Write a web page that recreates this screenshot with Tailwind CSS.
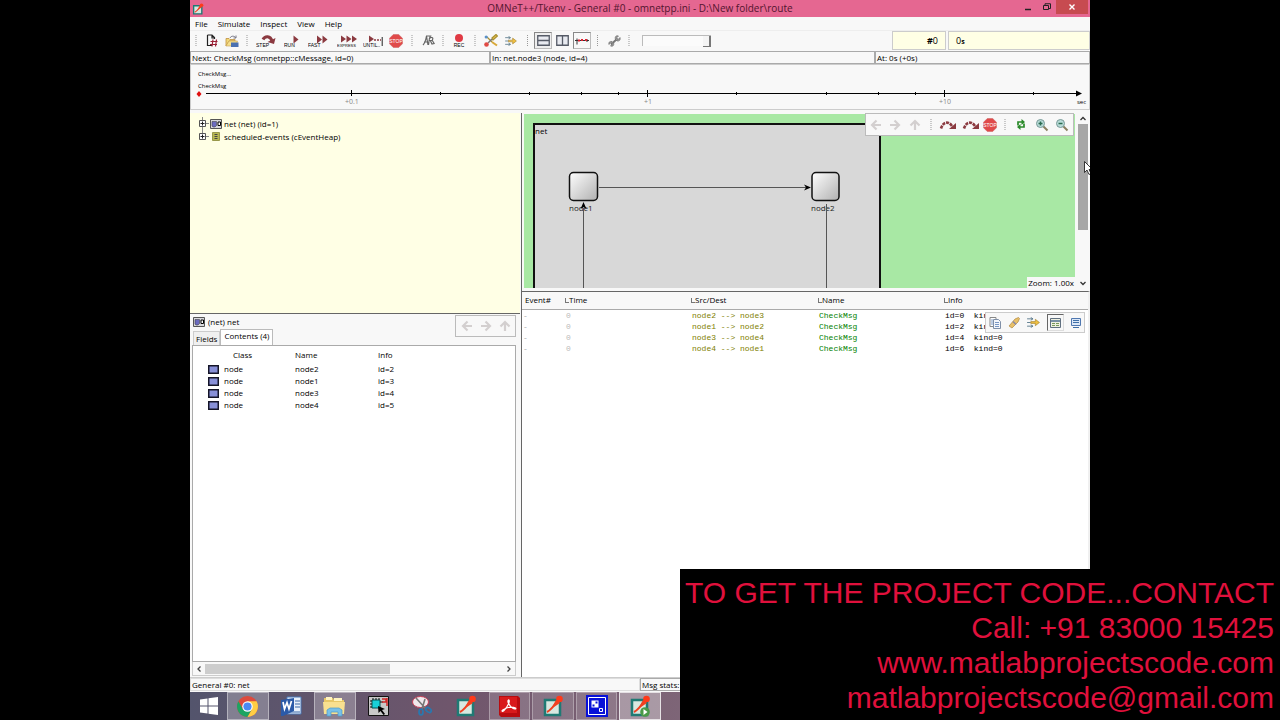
<!DOCTYPE html>
<html lang="en">
<head>
  <meta charset="UTF-8">
  <meta name="viewport" content="width=device-width, initial-scale=1.0">
  <title>OMNeT++/Tkenv - General #0</title>
  <script src="https://cdn.jsdelivr.net/npm/@tailwindcss/browser@4"></script>
</head>
<body class="bg-black h-screen overflow-hidden relative px-[190px] font-['Open_Sans',sans-serif] text-[8px] leading-3 text-black">

  <!-- shared icons -->
  <svg class="hidden">
    <symbol id="i-sep" viewBox="0 0 2 12"><path d="M1 0v12" stroke="#999" stroke-width="1" stroke-dasharray="1 1"/></symbol>
    <symbol id="i-stop" viewBox="0 0 14 14">
      <path d="M4.300.5h5.400l3.800 3.800v5.400l-3.800 3.800H4.300L.5 9.700V4.300z" fill="#e04a4a" stroke="#cf6a6a" stroke-width=".6"/>
      <text x="7" y="9" text-anchor="middle" font-size="5" fill="#fff" font-family="Liberation Sans">STOP</text>
    </symbol>
    <symbol id="i-left" viewBox="0 0 12 12"><path d="M11 6H2M6.500 1.500 2 6l4.500 4.500" fill="none" stroke="#d3cfcf" stroke-width="2.200"/></symbol>
    <symbol id="i-right" viewBox="0 0 12 12"><path d="M1 6h9M5.500 1.500 10 6l-4.500 4.500" fill="none" stroke="#d3cfcf" stroke-width="2.200"/></symbol>
    <symbol id="i-up" viewBox="0 0 12 12"><path d="M6 11V2M1.500 6.500 6 2l4.500 4.500" fill="none" stroke="#d3cfcf" stroke-width="2.200"/></symbol>
    <symbol id="i-hop" viewBox="0 0 18 12">
      <path d="M2 9.500C4 3 9 1.500 13 7" fill="none" stroke="#8b3a40" stroke-width="2.600" stroke-dasharray="3 1"/>
      <path d="M17 4v6h-7z" fill="#8b3a40"/>
    </symbol>
    <symbol id="i-mag" viewBox="0 0 14 14">
      <path d="m8 8 4.500 4.500" stroke="#8a8060" stroke-width="2"/>
      <circle cx="5.500" cy="5.500" r="4" fill="#b8dcd8" stroke="#7a9a98" stroke-width="1"/>
      <path d="M3.500 5.500h4" stroke="#2c6b50" stroke-width="1.500"/>
    </symbol>
    <symbol id="i-compound" viewBox="0 0 12 10">
      <path d="M.5.5h11v9H.5z" fill="#d8d8dc" stroke="#555"/>
      <path d="M2 2.500h4.500v4L5 8H3L2 7z" fill="#6c6cc0" stroke="#333" stroke-width=".5"/>
      <path d="M8 3h2.500v3.500H8z" fill="#fff" stroke="#000" stroke-width="1"/>
    </symbol>
    <symbol id="i-module" viewBox="0 0 11 9"><path d="M.75.75h9.500v7.500H.75z" fill="#8890d8" stroke="#151528" stroke-width="1.500"/></symbol>
    <symbol id="i-filter" viewBox="0 0 14 12">
      <path d="M0 2h6M0 6h4M0 10h6M4 .5 6.500 2 4 3.500M4 8.500 6.500 10 4 11.500" fill="none" stroke="#5a7a8c" stroke-width="1"/>
      <path d="M4 5h5V2.500L13.500 6 9 9.500V7H4z" fill="#f0c040" stroke="#a08030" stroke-width=".7"/>
    </symbol>
    <symbol id="i-omnet" viewBox="0 0 20 22">
      <path d="M2 5h15v15H2z" fill="#d8e8e0" stroke="#1f7a74" stroke-width="2.500"/>
      <path d="M4 17C8 15 11 11 15 5" fill="none" stroke="#f04020" stroke-width="2"/>
      <path d="m8 14 5-9 4 3z" fill="#f04020"/>
      <circle cx="16.500" cy="4" r="3.300" fill="#ff3a1a"/>
    </symbol>
  </svg>

  <div class="h-full flex flex-col bg-[#f8f8f8] relative">

    <!-- title bar -->
    <header class="h-[17px] shrink-0 bg-[#e56791] flex items-center justify-between relative">
      <svg class="w-3 h-3 ml-[2px]"><use href="#i-omnet"/></svg>
      <h1 class="absolute inset-x-0 text-center text-[10px] leading-[17px] text-[#52152e]">OMNeT++/Tkenv - General #0 - omnetpp.ini - D:\New folder\route</h1>
      <div class="flex h-full relative pr-[2px]">
        <button aria-label="Minimize" class="w-[18px] flex items-center justify-center"><svg class="w-[6px] h-2" viewBox="0 0 6 8"><path d="M0 4.500h6" stroke="#222" stroke-width="1.500"/></svg></button>
        <button aria-label="Restore" class="w-[19px] flex justify-center items-start pt-[3px]"><svg class="w-2 h-2" viewBox="0 0 8 8"><path d="M.5 2.500h5v4h-5zM2 2.500V.75h5.500V5.500H5.500" fill="none" stroke="#222"/></svg></button>
        <button aria-label="Close" class="w-8 h-[14px] bg-[#c74b50] flex items-center justify-center"><svg class="w-[6px] h-[6px]" viewBox="0 0 6 6"><path d="m.5.5 5 5m0-5-5 5" stroke="#fff" stroke-width="1.400"/></svg></button>
      </div>
    </header>

    <!-- menu -->
    <nav class="h-[13px] shrink-0 flex items-center gap-[10px] pl-[5px]">
      <button>File</button><button>Simulate</button><button>Inspect</button><button>View</button><button>Help</button>
    </nav>

    <!-- toolbar -->
    <div class="h-[21px] shrink-0 flex items-center border-t border-[#eee] pl-px pb-px">
      <svg class="w-[10px] h-3"><use href="#i-sep"/></svg>
      <button aria-label="New" class="w-[21px] flex justify-center"><svg class="w-3 h-[13px]" viewBox="0 0 12 13"><path d="M1.500 1v10.500H6M1.500 1H6l2.500 2.500V5M6 1v3h2.500" fill="none" stroke="#222" stroke-width="1.200"/><path d="m7 5.500-1 7M10.500 5.500l-1 7M4.500 7.500h7M4 10.500h7" stroke="#9b2035" stroke-width="1.200"/></svg></button>
      <button aria-label="Open" class="w-5 flex justify-center"><svg class="w-[14px] h-3" viewBox="0 0 14 12"><path d="M1 11V3.500h3l1 1h5V6H4z" fill="#f0d878" stroke="#c09040" stroke-width=".8"/><path d="M1 11 4 6h8.500L11 11z" fill="#f6e08c" stroke="#c8a050" stroke-width=".6"/><path d="M5 3C6 .8 9 .6 10.500 2.500M11 .5v2.500H8.500" fill="none" stroke="#667" stroke-width=".9"/><path d="M6 7.500h7.500V12H6z" fill="#4a70b0"/></svg></button>
      <svg class="w-[10px] h-3"><use href="#i-sep"/></svg>
      <button aria-label="Step" class="w-7 flex justify-center"><svg class="w-5 h-3" viewBox="0 0 20 12"><path d="M7 4.500C9 .5 14.500.5 16 6" fill="none" stroke="#8b3a40" stroke-width="3"/><path d="m19.500 3-1.500 6-6.500-2z" fill="#8b3a40"/><text x="0" y="11.500" font-size="5" font-family="Liberation Sans">STEP</text></svg></button>
      <button aria-label="Run" class="w-[22px] flex justify-center"><svg class="w-[15px] h-3" viewBox="0 0 15 12"><path d="m9.500.5 5 4-5 4z" fill="#8b3a40"/><text x="0" y="11.500" font-size="5" font-family="Liberation Sans">RUN</text></svg></button>
      <button aria-label="Fast" class="w-[31px] flex justify-center"><svg class="w-5 h-3" viewBox="0 0 20 12"><path d="m9 .5 5 4-5 4zM14.500.5l5 4-5 4z" fill="#8b3a40"/><text x="0" y="11.500" font-size="5" font-family="Liberation Sans">FAST</text></svg></button>
      <button aria-label="Express" class="w-[27px] flex justify-center"><svg class="w-5 h-3" viewBox="0 0 20 12"><path d="m4 .5 5 3.500-5 3.500zM9.500.5l5 3.500-5 3.500zM15 .5 20 4l-5 3.500z" fill="#8b3a40"/><text x="0" y="11.500" font-size="4" font-family="Liberation Sans">EXPRESS</text></svg></button>
      <button aria-label="Until" class="w-[26px] flex justify-center"><svg class="w-5 h-3" viewBox="0 0 20 12"><path d="m6 .5 5 3.500-5 3.500z" fill="#8b3a40"/><path d="M11 5h7" stroke="#8b3a40" stroke-width="1.500" stroke-dasharray="2 1"/><path d="M19.200 2v9" stroke="#222" stroke-width="1"/><text x="0" y="11.500" font-size="5" font-family="Liberation Sans">UNTIL..</text></svg></button>
      <button aria-label="Stop" class="w-5 flex justify-center"><svg class="w-[14px] h-[14px]"><use href="#i-stop"/></svg></button>
      <svg class="w-3 h-3"><use href="#i-sep"/></svg>
      <button aria-label="Call finish" class="w-5 flex justify-center"><svg class="w-[13px] h-[11px]" viewBox="0 0 13 11"><path d="M1 10c2-2 3-6 3.500-9L6 10M2 7h4M4 1h4.500C7 3 7 7 6.500 10M7 4c3-3 5-1 3 1.500H7.500M10 5l2.500 4M8.500 6l1.500 3 2-.500" fill="none" stroke="#666" stroke-width="1.200"/></svg></button>
      <svg class="w-[10px] h-3"><use href="#i-sep"/></svg>
      <button aria-label="Record" class="w-[22px] flex justify-center"><svg class="w-3 h-[13px]" viewBox="0 0 12 13"><circle cx="6" cy="4" r="4" fill="#e03a44"/><text x="6" y="12.500" text-anchor="middle" font-size="5" font-family="Liberation Sans">REC</text></svg></button>
      <svg class="w-[10px] h-3"><use href="#i-sep"/></svg>
      <button aria-label="Find" class="w-[21px] flex justify-center"><svg class="w-[14px] h-[13px]" viewBox="0 0 14 13"><path d="m3 3 5 5M8 4l4-3.500 1.500 1.500L9 6z" fill="#e8c050" stroke="#a89030" stroke-width="1.200"/><path d="m4 9 4-4" stroke="#777" stroke-width="1.500"/><circle cx="2.500" cy="10.500" r="2.300" fill="#e04a44"/><circle cx="2.200" cy="3" r="1.600" fill="#5a90c8"/><path d="m8 8 5 3.500" stroke="#d8a838" stroke-width="2"/></svg></button>
      <button aria-label="Filter" class="w-5 flex justify-center"><svg class="w-3 h-[10px]"><use href="#i-filter"/></svg></button>
      <svg class="w-[13px] h-3"><use href="#i-sep"/></svg>
      <button aria-label="Vertical layout" class="w-[18px] h-[17px] border border-[#bbb] border-t-[#888] border-l-[#888] bg-[#eee] flex items-center justify-center"><svg class="w-[13px] h-[11px]" viewBox="0 0 13 11"><path d="M.75.75h11.500v9.500H.75zM1 5.500h11" fill="#e8eaf0" stroke="#555a66" stroke-width="1.300"/></svg></button>
      <button aria-label="Horizontal layout" class="w-[21px] flex justify-center"><svg class="w-[13px] h-[11px]" viewBox="0 0 13 11"><path d="M.75.75h11.500v9.500H.75zM6.500 1v9" fill="#e8eaf0" stroke="#555a66" stroke-width="1.300"/></svg></button>
      <button aria-label="Timeline" class="w-[18px] h-[17px] border border-[#bbb] border-t-[#888] border-l-[#888] flex items-center justify-center"><svg class="w-[15px] h-[11px]" viewBox="0 0 15 11"><path d="M0 5.500h14M2 3.500v6M12 4v3" stroke="#333" stroke-width="1"/><path d="M3 5.500h2M6 5h2M10 5h2" stroke="#e02030" stroke-width="2"/></svg></button>
      <svg class="w-[13px] h-3"><use href="#i-sep"/></svg>
      <button aria-label="Preferences" class="w-5 flex justify-center"><svg class="w-[13px] h-3" viewBox="0 0 13 12"><path d="m3 9.500 6.500-6" stroke="#777" stroke-width="2"/><path d="M12 2.500 10 4.500 8.500 3 10.500 1C8 0 6.500 2 7.500 4.500L9 6c2 .5 4-1 3-3.500zM1 9.500l2-2 1.500 1.500-2 2C5 12 6.500 10 5.500 8L4 6.500C1.500 6 .2 7.500 1 9.500z" fill="#999" stroke="#666" stroke-width=".6"/></svg></button>
      <svg class="w-[10px] h-3 mr-2"><use href="#i-sep"/></svg>
      <input type="range" aria-label="Animation speed" min="0" max="100" value="100" class="appearance-none w-[69px] h-[11px] bg-[#fbfbfb] border-t border-l border-[#bbb] [&::-webkit-slider-thumb]:appearance-none [&::-webkit-slider-thumb]:w-2 [&::-webkit-slider-thumb]:h-[11px] [&::-webkit-slider-thumb]:bg-[#f4f4f4] [&::-webkit-slider-thumb]:border-r-2 [&::-webkit-slider-thumb]:border-b [&::-webkit-slider-thumb]:border-[#777]">
      <div class="ml-auto w-[198px] h-[19px] flex gap-[2px] text-[9px] leading-[17px]">
        <output class="w-[54px] border border-[#ccc] bg-[#ffffe5] text-right pr-[7px]"><b>#</b>0</output>
        <output class="flex-1 border border-[#ccc] bg-[#ffffe5] pl-[7px]">0<b class="text-[7px]">s</b></output>
      </div>
    </div>

    <!-- simulation status -->
    <div class="h-[13px] shrink-0 grid grid-cols-[300fr_385fr_215fr] leading-[11px]">
      <div class="border border-[#aaa] pl-px">Next: CheckMsg (omnetpp::cMessage, id=0)</div>
      <div class="border border-[#aaa] pl-px">In: net.node3 (node, id=4)</div>
      <div class="border border-[#aaa] pl-px">At: 0s (+0s)</div>
    </div>

    <!-- timeline -->
    <svg class="w-full shrink-0 border border-[#ccc]" viewBox="1 1 898 44">
      <g stroke="#000">
        <path d="M16 29.500h872"/>
        <path d="M161.500 26v6M457.500 26v7M754.500 26v7M250.500 28v3M339.500 28v3M391.500 28v3M428.500 28v3M546.500 28v3M636.500 28v3M688.500 28v3M725.500 28v3M843.500 28v3"/>
      </g>
      <path d="m886 26.500 6 3-6 3z"/>
      <path d="m9 27 2.500 3-2.500 3-2.500-3z" fill="#e01010"/>
      <g font-size="7" font-family="Open Sans">
        <text x="8" y="12" font-size="6">CheckMsg...</text>
        <text x="8" y="24" font-size="6">CheckMsg</text>
        <g fill="#888"><text x="155" y="40">+0.1</text><text x="454" y="40">+1</text><text x="749" y="40">+10</text></g>
        <text x="887" y="40" font-size="6">sec</text>
      </g>
    </svg>

    <div class="flex-1 min-h-0 flex pt-[3px]">
      <!-- left: object tree and inspector -->
      <div class="w-[330px] shrink-0 flex flex-col">
        <ul class="h-[201px] shrink-0 bg-[#ffffe5] border-b border-[#666] pt-1 pl-2">
          <li class="flex items-center h-[13px]"><svg class="w-3 h-[13px]" viewBox="0 0 12 13"><path d="M4.500 0v13M8 6.500h3" stroke="#888"/><path d="M1.500 3.500h6v6h-6z" fill="#fff" stroke="#555"/><path d="M2.500 6.500h4M4.500 4.500v4" stroke="#222"/></svg><svg class="w-3 h-[10px] mr-[2px]"><use href="#i-compound"/></svg>net (net) (id=1)</li>
          <li class="flex items-center h-[13px]"><svg class="w-3 h-[13px]" viewBox="0 0 12 13"><path d="M4.500 0v4M8 6.500h3" stroke="#888"/><path d="M1.500 3.500h6v6h-6z" fill="#fff" stroke="#555"/><path d="M2.500 6.500h4M4.500 4.500v4" stroke="#222"/></svg><svg class="w-3 h-[9px] mr-[2px]" viewBox="0 0 12 9"><path d="M2.500.5h7v8h-7z" fill="#b8b850" stroke="#98984a"/><path d="M4.500 2.500h3M4.500 4.500h3M4.500 6.500h3" stroke="#444"/></svg>scheduled-events (cEventHeap)</li>
        </ul>

        <div class="flex justify-between pt-px pr-1">
          <div>
            <div class="flex items-center gap-[3px] h-[14px] pl-[3px]"><svg class="w-3 h-[10px]"><use href="#i-compound"/></svg>(net) net</div>
            <div class="flex items-end pl-[3px]" role="tablist">
              <button role="tab" class="h-[14px] px-[2px] border border-b-0 border-[#ccc] bg-[#f0f0f0]">Fields</button>
              <button role="tab" aria-selected="true" class="h-4 px-[3px] pb-1 border border-b-0 border-[#bbb] bg-white">Contents (4)</button>
            </div>
          </div>
          <div class="w-[61px] h-[22px] border border-[#bbb] flex items-center justify-around px-px">
            <button aria-label="Back"><svg class="w-3 h-3"><use href="#i-left"/></svg></button>
            <button aria-label="Forward"><svg class="w-3 h-3"><use href="#i-right"/></svg></button>
            <button aria-label="Up"><svg class="w-3 h-3"><use href="#i-up"/></svg></button>
          </div>
        </div>
        <div class="flex-1 min-h-0 ml-[2px] mr-1 bg-white border border-[#aaa]">
          <table class="w-full table-fixed text-left">
            <colgroup><col class="w-[15px]"><col class="w-[16px]"><col class="w-[71px]"><col class="w-[83px]"><col></colgroup>
            <thead><tr class="h-[17px]"><th colspan="2"></th><th class="font-normal pl-[9px]">Class</th><th class="font-normal">Name</th><th class="font-normal">Info</th></tr></thead>
            <tbody>
              <tr><td></td><td><svg class="w-[11px] h-[9px]"><use href="#i-module"/></svg></td><td>node</td><td>node2</td><td>id=2</td></tr>
              <tr><td></td><td><svg class="w-[11px] h-[9px]"><use href="#i-module"/></svg></td><td>node</td><td>node1</td><td>id=3</td></tr>
              <tr><td></td><td><svg class="w-[11px] h-[9px]"><use href="#i-module"/></svg></td><td>node</td><td>node3</td><td>id=4</td></tr>
              <tr><td></td><td><svg class="w-[11px] h-[9px]"><use href="#i-module"/></svg></td><td>node</td><td>node4</td><td>id=5</td></tr>
            </tbody>
          </table>
        </div>
        <div class="h-[14px] ml-[2px] mr-1 mb-px border border-t-0 border-[#ccc] flex items-center px-[3px]">
          <svg class="w-[6px] h-2" viewBox="0 0 6 8"><path d="M4.500 1.500 2 4l2.500 2.500" fill="none" stroke="#444" stroke-width="1.300"/></svg>
          <div class="flex-1 mx-[3px]"><div class="w-[62%] h-[10px] bg-[#cdcdcd]"></div></div>
          <svg class="w-[6px] h-2" viewBox="0 0 6 8"><path d="M1.500 1.500 4 4 1.500 6.500" fill="none" stroke="#444" stroke-width="1.300"/></svg>
        </div>
      </div>

      <!-- right: network canvas and event log -->
      <div class="flex-1 min-w-0 flex flex-col ml-px border-l border-[#666]">
        <div class="h-[175px] shrink-0 flex pt-px pl-[2px] relative">
          <div class="flex-1 bg-[#a8e8a4] relative overflow-hidden">
            <div class="absolute left-[9px] top-[9px] -bottom-1 w-[348px] bg-[#d8d8d8] border-2 border-[#111]">net</div>
            <svg class="absolute left-0 top-0 w-[360px] h-[175px]" viewBox="0 0 360 175">
              <defs><linearGradient id="node" x1="0" y1="0" x2="1" y2="1"><stop offset="0" stop-color="#fff"/><stop offset="1" stop-color="#b0b0b0"/></linearGradient></defs>
              <g fill="url(#node)" stroke="#111" stroke-width="1.500"><rect x="45.500" y="58.500" width="28" height="28" rx="4"/><rect x="288" y="58.500" width="27" height="28" rx="4"/></g>
              <g font-size="8" font-family="Open Sans" fill="#222"><text x="45" y="97">node1</text><text x="287" y="97">node2</text></g>
              <path d="M75 73.500h207M59.500 94v82M302.500 90v86" stroke="#555"/>
              <path d="m287 73.500-7-3 2 3-2 3zM59.500 88l-3 7 3-2 3 2z"/>
            </svg>
            <div class="absolute right-0 bottom-0 bg-[#f8f8f8] px-px leading-[11px]">Zoom: 1.00x</div>
          </div>
          <div class="absolute right-4 top-0 w-[209px] h-[23px] bg-[#f8f8f8] border border-[#bbb] flex items-center px-1">
            <button aria-label="Back" class="w-[19px]"><svg class="w-3 h-3"><use href="#i-left"/></svg></button>
            <button aria-label="Forward" class="w-5"><svg class="w-3 h-3"><use href="#i-right"/></svg></button>
            <button aria-label="Up" class="w-[18px]"><svg class="w-3 h-3"><use href="#i-up"/></svg></button>
            <svg class="w-2 h-3 mr-1"><use href="#i-sep"/></svg>
            <button aria-label="Run until next event" class="w-[23px]"><svg class="w-[18px] h-3"><use href="#i-hop"/></svg></button>
            <button aria-label="Fast run until next event" class="w-[21px]"><svg class="w-[18px] h-3"><use href="#i-hop"/></svg></button>
            <button aria-label="Stop" class="w-[18px]"><svg class="w-[14px] h-[14px]"><use href="#i-stop"/></svg></button>
            <svg class="w-2 h-3 mr-[7px]"><use href="#i-sep"/></svg>
            <button aria-label="Re-layout" class="w-[19px]"><svg class="w-[10px] h-[11px]" viewBox="0 0 10 11"><path d="M2 6.500V3h5M8 4.500V8H3" fill="none" stroke="#2a8a2a" stroke-width="1.700"/><path d="m5.500 0 3.500 3-3.500 3zM4.500 5 1 8l3.500 3z" fill="#2a8a2a"/></svg></button>
            <button aria-label="Zoom in" class="w-5"><svg class="w-[14px] h-[14px]"><use href="#i-mag"/><path d="M5.500 3.500v4" stroke="#2c6b50" stroke-width="1.500"/></svg></button>
            <button aria-label="Zoom out" class="w-[14px]"><svg class="w-[14px] h-[14px]"><use href="#i-mag"/></svg></button>
          </div>
          <div class="w-[15px] flex flex-col items-center justify-between">
            <svg class="w-2 h-[10px] shrink-0" viewBox="0 0 8 10"><path d="M1.500 6 4 3.500 6.500 6" fill="none" stroke="#333" stroke-width="1.300"/></svg>
            <div class="flex-1 w-[10px]"><div class="h-[106px] bg-[#a6a6a6]"></div></div>
            <svg class="w-2 h-[10px] shrink-0" viewBox="0 0 8 10"><path d="M1.500 4 4 6.500 6.500 4" fill="none" stroke="#333" stroke-width="1.300"/></svg>
          </div>
        </div>

        <div class="flex-1 min-h-0 mt-[3px] border-t border-[#666] relative bg-white border-r-2 border-r-[#f0f0f0]">
          <table class="w-full table-fixed text-left">
            <colgroup><col class="w-[43px]"><col class="w-[126px]"><col class="w-[127px]"><col class="w-[126px]"><col></colgroup>
            <thead class="bg-[#f8f8f8]">
              <tr class="h-[17px] border-b border-[#aaa] *:font-normal *:p-0">
                <th><span class="pl-[3px]">Event#</span></th>
                <th><span class="inline-block w-1 h-[5px] border-l border-b border-[#777]"></span>Time</th>
                <th><span class="inline-block w-1 h-[5px] border-l border-b border-[#777]"></span>Src/Dest</th>
                <th><span class="inline-block w-1 h-[5px] border-l border-b border-[#777]"></span>Name</th>
                <th><span class="inline-block w-1 h-[5px] border-l border-b border-[#777]"></span>Info</th>
              </tr>
            </thead>
            <tbody class="font-['Liberation_Mono',monospace] leading-[10px]">
              <tr class="h-[12px] align-bottom"><td class="pl-px text-[#aaa]">-</td><td class="pl-px text-[#bbb]">0</td><td class="pl-px text-[#808000]">node2 --&gt; node3</td><td class="pl-px text-[#008000]">CheckMsg</td><td class="pl-px whitespace-pre">id=0  kind=0</td></tr>
              <tr class="h-[11px] align-bottom"><td class="pl-px text-[#aaa]">-</td><td class="pl-px text-[#bbb]">0</td><td class="pl-px text-[#808000]">node1 --&gt; node2</td><td class="pl-px text-[#008000]">CheckMsg</td><td class="pl-px whitespace-pre">id=2  kind=0</td></tr>
              <tr class="h-[11px] align-bottom"><td class="pl-px text-[#aaa]">-</td><td class="pl-px text-[#bbb]">0</td><td class="pl-px text-[#808000]">node3 --&gt; node4</td><td class="pl-px text-[#008000]">CheckMsg</td><td class="pl-px whitespace-pre">id=4  kind=0</td></tr>
              <tr class="h-[11px] align-bottom"><td class="pl-px text-[#aaa]">-</td><td class="pl-px text-[#bbb]">0</td><td class="pl-px text-[#808000]">node4 --&gt; node1</td><td class="pl-px text-[#008000]">CheckMsg</td><td class="pl-px whitespace-pre">id=6  kind=0</td></tr>
            </tbody>
          </table>
          <div class="absolute right-[3px] top-[20px] w-[100px] h-[21px] bg-[#f8f8f8] border border-[#ccc] flex items-center justify-around">
            <button aria-label="Copy"><svg class="w-3 h-3" viewBox="0 0 12 12"><path d="M1 .5h6v9H1z" fill="#fff" stroke="#888"/><path d="M4.500 2.500h5l2 2v7h-7z" fill="#f4f6fa" stroke="#8090a8"/><path d="M6 5.500h4M6 7.500h4M6 9.500h4M2 3h2M2 5h2M2 7h2" stroke="#5a80b8" stroke-width=".8"/></svg></button>
            <button aria-label="Find"><svg class="w-3 h-3" viewBox="0 0 12 12"><path d="m1 9 6-7 3.500-1.500 1 1L10 5l-6 6z" fill="#e8c068" stroke="#b08840" stroke-width=".7"/><path d="m5 4.500 3 3" stroke="#8888a8" stroke-width="1.500"/></svg></button>
            <button aria-label="Filter"><svg class="w-[13px] h-[11px]"><use href="#i-filter"/></svg></button>
            <button aria-label="Messages view" class="w-[17px] h-[17px] border border-[#ddd] border-t-[#666] border-l-[#666] flex items-center justify-center"><svg class="w-[11px] h-[10px]" viewBox="0 0 11 10"><path d="M.5.5h10v9H.5z" fill="#eef0e0" stroke="#607080"/><path d="M1 3h9" stroke="#507090" stroke-width="1.500"/><path d="M2 5.500h3M6 5.500h3M2 7.500h3M6 7.500h3" stroke="#78985a"/></svg></button>
            <button aria-label="Log view"><svg class="w-[10px] h-[10px]" viewBox="0 0 10 10"><path d="M.5.500h9v7h-9z" fill="#dce8f8" stroke="#5078b0"/><path d="M2 2.500h6M2 4.500h6M2 9.500h6" stroke="#4070a8"/></svg></button>
          </div>
        </div>
      </div>
    </div>

    <!-- bottom status -->
    <footer class="h-[15px] shrink-0 border-t border-[#ccc] grid grid-cols-[450fr_450fr] leading-[11px] pb-px">
      <div class="border border-[#ddd] pl-px">General #0: net</div>
      <div class="border border-[#aaa] pl-px">Msg stats: 4 scheduled</div>
    </footer>

    <!-- taskbar -->
    <div class="h-7 shrink-0 bg-linear-to-r from-[#53546c] via-[#70566c] via-30% to-[#98828c] flex">
      <button aria-label="Start" class="w-[37px] flex items-center justify-center"><svg class="w-[18px] h-[18px]" viewBox="0 0 18 18"><path d="m0 2.500 7.500-1v7H0zM8.500 1.300 18 0v8.500H8.500zM0 9.500h7.500v7L0 15.500zM8.500 9.500H18V18l-9.500-1.300z" fill="#fff"/></svg></button>
      <div class="w-[434px] grid grid-cols-10 gap-[2px] *:flex *:items-center *:justify-center">
        <button aria-label="Chrome" class="bg-white/25 border border-white/40"><svg class="w-[21px] h-[21px]" viewBox="0 0 20 20"><circle cx="10" cy="10" r="10" fill="#dd4b3e"/><path d="M1.340 5A10 10 0 0 0 10 20l4.300-7.500-8.600 0z" fill="#1da462"/><path d="M18.660 5A10 10 0 0 1 10 20l4.300-7.500L10 5z" fill="#ffce44"/><circle cx="10" cy="10" r="5" fill="#fff"/><circle cx="10" cy="10" r="3.900" fill="#4a8af4"/></svg></button>
        <button aria-label="Word"><svg class="w-[22px] h-[21px]" viewBox="0 0 22 21"><path d="M7 1h14v17H7z" fill="#e8f0fa" stroke="#4a78b8"/><path d="M15 5h5M15 8h5M15 11h5M9 16h11" stroke="#3a68a8"/><path d="m1 4 13-2v13L3 20H1z" fill="#2b5aa8"/><path d="m3 6 1.500 7L7 6.500l2 6.500L11.500 5" fill="none" stroke="#fff" stroke-width="1.700"/></svg></button>
        <button aria-label="File Explorer" class="bg-white/25 border border-white/40"><svg class="w-[23px] h-[21px]" viewBox="0 0 23 21"><path d="M1 2h9l1 2h10v14H1z" fill="#e8c868"/><path d="M3 1h6v3H3zM11 2h8v3h-8z" fill="#fff4c0"/><path d="M0 6h22l-1 12H1z" fill="#f8e090"/><path d="M4 20v-6l3-2h9l3 2v6h-4v-4H8v4z" fill="#78c0e8" stroke="#4a98c8" stroke-width=".7"/></svg></button>
        <button aria-label="Simulator"><svg class="w-[21px] h-5" viewBox="0 0 21 20"><path d="M.5.500h20v19H.5z" fill="#c8c8c8" stroke="#111"/><path d="M4 4h8v8H4z" fill="#18d0d8" stroke="#055"/><path d="M5 2v2M8 2v2M11 2v2M2 5h2M2 8h2M2 11h2M12 6h3" stroke="#111"/><path d="M14 3h4v3h-4M19 2v8" fill="none" stroke="#d02828" stroke-width="1.500"/><path d="m10 10 7 3-3 1 3 4-1.500 1-3-4-2 2z"/></svg></button>
        <button aria-label="Snipping Tool"><svg class="w-[21px] h-[21px]" viewBox="0 0 21 21"><ellipse cx="8.500" cy="6" rx="8" ry="5.500" fill="#f0e8ec" stroke="#c84058"/><path d="m4 2 10 11M13 3 10 13" stroke="#777" stroke-width="1.600"/><ellipse cx="9" cy="16" rx="2" ry="3" fill="none" stroke="#2878b0" stroke-width="1.700"/><ellipse cx="16.500" cy="14" rx="3" ry="2" fill="none" stroke="#2878b0" stroke-width="1.700" transform="rotate(35 16.500 14)"/></svg></button>
        <button aria-label="OMNeT++"><svg class="w-5 h-[22px]"><use href="#i-omnet"/></svg></button>
        <button aria-label="Acrobat Reader" class="bg-white/15 border border-white/30"><svg class="w-[21px] h-[21px]" viewBox="0 0 21 21"><path d="M0 0h19l2 2v19H2l-2-2z" fill="#b80c10"/><path d="M1 1h17v16H1z" fill="#d81a1c"/><path d="M9.500 4c2 0 0 6-5 11-2 1-2-1 1-2 3-1.500 8-2.500 11-1 1 1-1 1.500-3 0C10 9.500 8 5 9.500 4z" fill="none" stroke="#fff" stroke-width="1.300"/></svg></button>
        <button aria-label="OMNeT++ IDE" class="bg-white/15 border border-white/30"><svg class="w-5 h-[22px]"><use href="#i-omnet"/></svg></button>
        <button aria-label="Tkenv console" class="bg-white/15 border border-white/30"><svg class="w-[22px] h-[22px]" viewBox="0 0 22 22"><path d="M0 0h22v22H0z" fill="#0810d8"/><path d="M2.500 2.500h17v17h-17z" fill="none" stroke="#fff"/><path d="M5.500 5.500h7v7h-7z" fill="#fff"/><path d="M6.500 9.500h2v2h-2zM9.500 6.500h2v2h-2z" fill="#0810d8"/><path d="M13.500 13.500h3v3h-3z" fill="none" stroke="#fff"/></svg></button>
        <button aria-label="OMNeT++/Tkenv" class="bg-white/35 border border-white/70"><svg class="w-5 h-[22px]" viewBox="0 0 20 22"><use href="#i-omnet"/><circle cx="15" cy="17" r="4.800" fill="#4a9a48"/><path d="m13.500 14 4 3-4 3z" fill="#fff"/></svg></button>
      </div>
    </div>

    <!-- mouse pointer, cut off by the window edge -->
    <div class="absolute right-0 top-[161px] w-[6px] h-[14px] overflow-hidden">
      <svg class="w-[9px] h-[14px] max-w-none" viewBox="0 0 9 14"><path d="M.5.5v11l2.500-2.500 2 4.500 2-1-2-4h3.500z" fill="#fff" stroke="#222" stroke-width=".9"/></svg>
    </div>
  </div>

  <!-- contact banner -->
  <aside class="absolute right-0 bottom-0 w-[600px] bg-black text-[#e0103c] text-right font-['Liberation_Sans',sans-serif] text-[30px] leading-[35px] pt-[6px] pb-[5px] pr-[6px]">
    <p>TO GET THE PROJECT CODE...CONTACT</p>
    <p>Call: +91 83000 15425</p>
    <p><a href="#">www.matlabprojectscode.com</a></p>
    <p><a href="#">matlabprojectscode@gmail.com</a></p>
  </aside>
</body>
</html>
